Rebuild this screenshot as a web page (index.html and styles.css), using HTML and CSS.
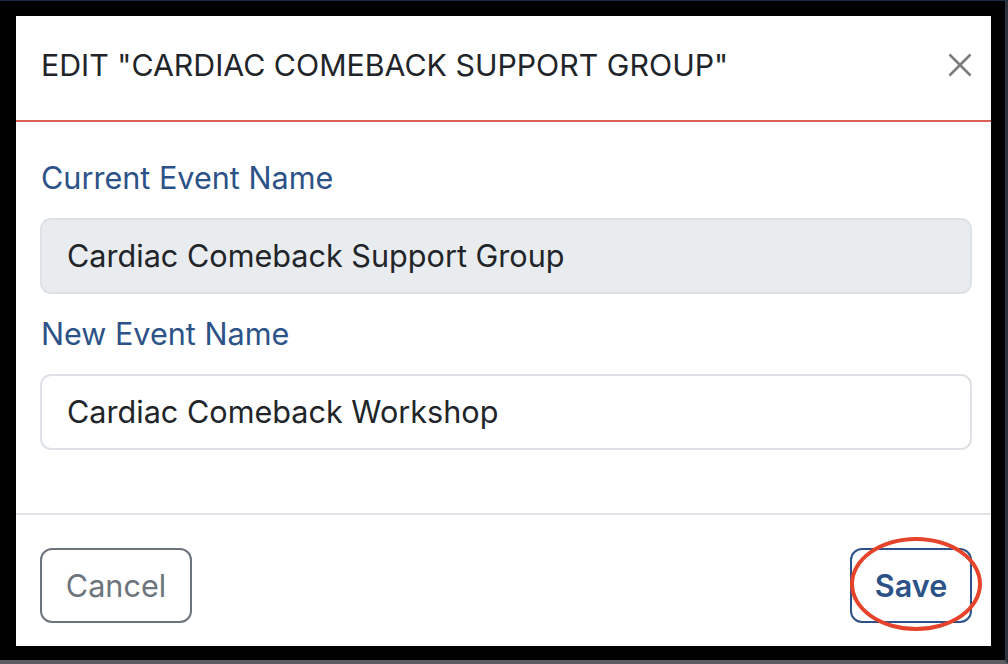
FILE: index.html
```html
<!DOCTYPE html>
<html lang="en">
<head>
<meta charset="utf-8">
<title>Edit event</title>
<link rel="stylesheet" href="styles.css">
</head>
<body>
<div class="screen">
  <div class="modal">
    <div class="modal-header">
      <h5 class="modal-title">Edit "Cardiac Comeback Support Group"</h5>
      <button class="close" aria-label="Close">
        <svg width="24" height="24" viewBox="0 0 24 24"><path d="M1.5 1.5 L22.5 22.5 M22.5 1.5 L1.5 22.5" stroke="#7d7d7d" stroke-width="2.6" fill="none"/></svg>
      </button>
    </div>
    <div class="modal-body">
      <label class="field-label">Current Event Name</label>
      <div class="input input-disabled">Cardiac Comeback Support Group</div>
      <label class="field-label">New Event Name</label>
      <div class="input">Cardiac Comeback Workshop</div>
    </div>
    <div class="modal-footer">
      <button class="btn btn-cancel">Cancel</button>
      <div class="save-wrap">
        <button class="btn btn-save">Save</button>
        <span class="highlight"></span>
      </div>
    </div>
  </div>
</div>
</body>
</html>
```

FILE: styles.css
```css
html, body {
  margin: 0;
  padding: 0;
  background: #000;
}
.screen {
  width: 1008px;
  height: 664px;
  box-sizing: border-box;
  background: #000;
  border-top: 1px solid #1b2c48;
  border-right: 3px solid #2c323b;
  border-bottom: 4px solid #5b5d60;
  padding: 15px 14px 0 16px;
  font-family: "Inter", "Liberation Sans", sans-serif;
}
.modal {
  width: 975px;
  height: 630px;
  background: #fff;
  display: flex;
  flex-direction: column;
}
.modal-header {
  height: 106px;
  box-sizing: border-box;
  border-bottom: 2px solid #dc5f57;
  display: flex;
  align-items: center;
  justify-content: space-between;
  padding: 0 19px 6px 25px;
}
.modal-title {
  margin: 0;
  font-size: 30.3px;
  font-weight: 400;
  line-height: 36px;
  color: #212529;
  text-transform: uppercase;
}
.close {
  border: 0;
  background: none;
  padding: 0;
  width: 24px;
  height: 24px;
  display: flex;
}
.modal-body {
  flex: 1;
  display: flex;
  flex-direction: column;
  padding: 36px 19px 0 24px;
}
.field-label {
  font-size: 30.6px;
  line-height: 40px;
  color: #2c5288;
  margin-bottom: 20px;
  padding-left: 1px;
}
.input {
  height: 76px;
  box-sizing: border-box;
  border: 2px solid #dee2e6;
  border-radius: 11px;
  background: #fff;
  color: #212529;
  font-size: 30.6px;
  line-height: 72px;
  padding: 0 25px;
  margin-bottom: 20px;
}
.input-disabled {
  background: #e9ecef;
}
.modal-footer {
  height: 133px;
  box-sizing: border-box;
  border-top: 2px solid #dfe2e6;
  display: flex;
  justify-content: space-between;
  align-items: flex-start;
  padding: 33px 19px 0 24px;
}
.btn {
  height: 75px;
  box-sizing: border-box;
  border-radius: 12px;
  background: #fff;
  font-family: "Inter", "Liberation Sans", sans-serif;
  font-size: 30.6px;
  padding: 0;
}
.btn-cancel {
  width: 152px;
  border: 2px solid #6c757d;
  color: #6c757d;
}
.save-wrap {
  position: relative;
}
.btn-save {
  width: 122px;
  border: 2px solid #2c5288;
  color: #2c5288;
  font-weight: 600;
}
.highlight {
  position: absolute;
  left: 0;
  top: -11px;
  width: 132px;
  height: 94px;
  box-sizing: border-box;
  border: 4px solid #e5432a;
  border-radius: 50%;
  pointer-events: none;
}
```
